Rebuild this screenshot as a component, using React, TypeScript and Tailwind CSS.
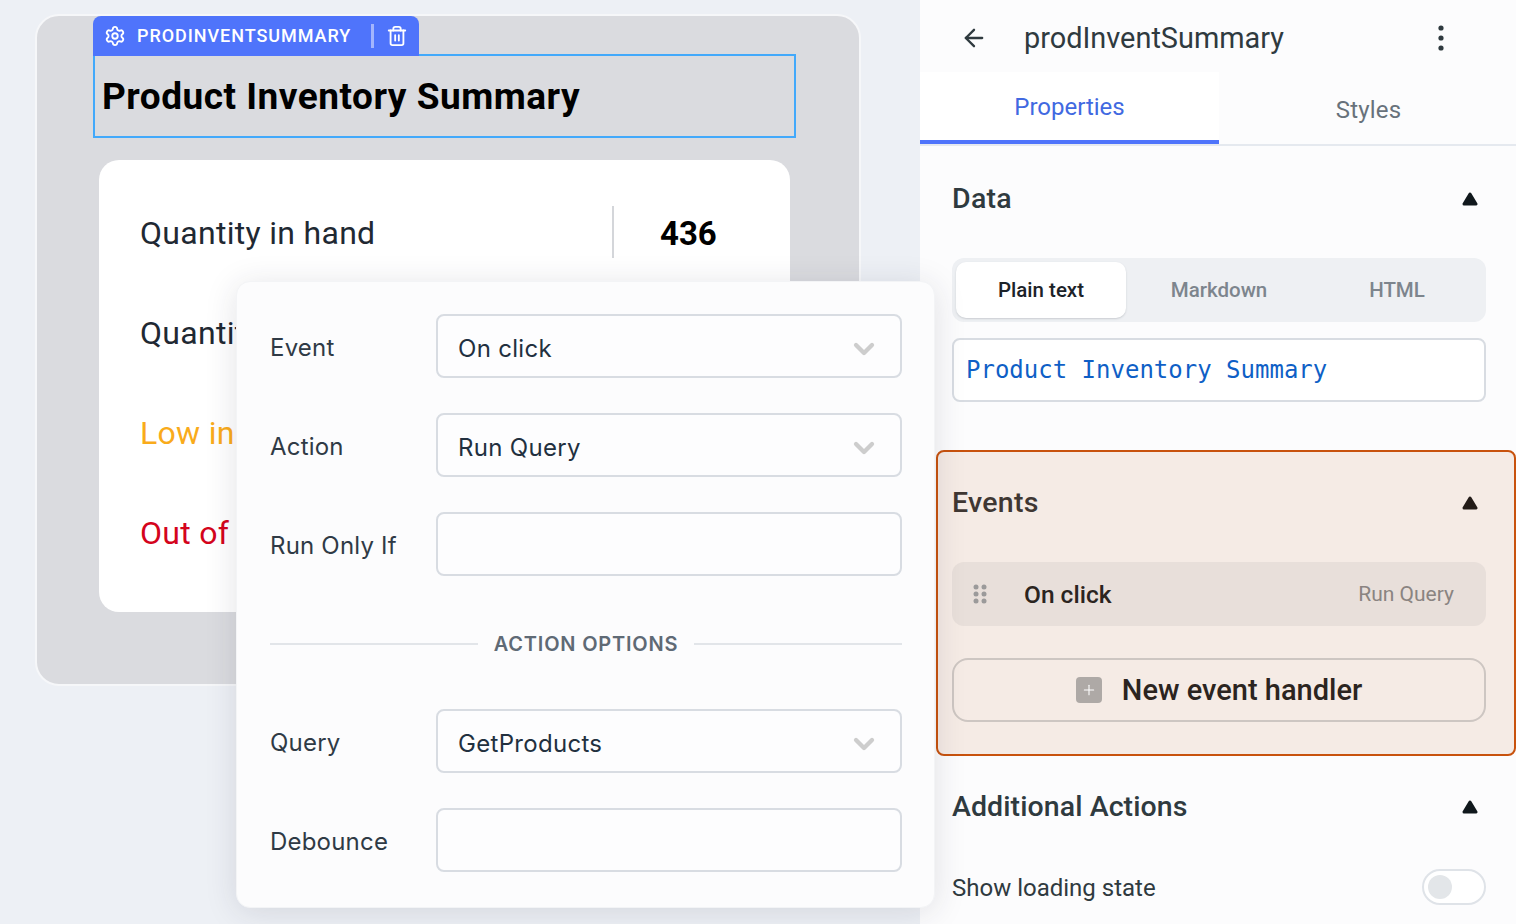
import { ArrowLeft, ChevronDown, Plus, Settings, Trash2 } from "lucide-react";

const sans = "font-['Roboto',sans-serif]";

const Triangle = ({ className }: { className: string }) => (
  <svg width="16" height="14" viewBox="0 0 16 14" className={className}>
    <path d="M8 2 L14 12 H2 Z" fill="currentColor" stroke="currentColor" strokeWidth="3" strokeLinejoin="round" />
  </svg>
);

const Grip = () => (
  <svg width="14" height="20" viewBox="0 0 14 20" className="fill-[#9b9a9a]">
    <circle cx="3" cy="3" r="2.5" />
    <circle cx="11" cy="3" r="2.5" />
    <circle cx="3" cy="10" r="2.5" />
    <circle cx="11" cy="10" r="2.5" />
    <circle cx="3" cy="17" r="2.5" />
    <circle cx="11" cy="17" r="2.5" />
  </svg>
);

const StatRow = ({ label, value, color, hasValue }: { label: string; value?: string; color: string; hasValue?: boolean }) => (
  <div className="flex h-[52px] items-center">
    <span className={`w-[472px] pt-[2px] text-[32px] tracking-[0.3px] ${color}`}>{label}</span>
    {hasValue && (
      <div className="flex h-[52px] items-center border-l-2 border-[#d4d6da] pl-[46px]">
        <span className="pt-1 text-[33px] font-bold text-black">{value}</span>
      </div>
    )}
  </div>
);

const Field = ({ label, value, select }: { label: string; value?: string; select?: boolean }) => (
  <div className="flex items-center">
    <span className="w-[166px] pt-1 text-[24px] tracking-[0.2px] text-[#2f3a45]">{label}</span>
    <div className="flex h-16 w-[466px] items-center justify-between rounded-[8px] border-2 border-[#d8dce2] bg-[#fdfdfe] pl-5 pr-[20px] text-[24px] tracking-[0.3px] text-[#22303f]">
      <span className="pt-[6px]">{value}</span>
      {select && <ChevronDown size={32} strokeWidth={3.2} className="mt-[6px] text-[#cdcdcd]" />}
    </div>
  </div>
);

const SectionHead = ({ title, color, arrow, tracking }: { title: string; color: string; arrow: string; tracking: string }) => (
  <div className="flex items-center justify-between pr-2">
    <span className={`text-[28.5px] font-medium ${tracking} ${color}`}>{title}</span>
    <Triangle className={arrow} />
  </div>
);

export default function App() {
  return (
    <div className={`relative flex h-[924px] w-[1516px] overflow-hidden bg-[#edf0f5] ${sans}`}>
      {/* canvas */}
      <div className="w-[920px] shrink-0 pl-[35px] pt-[14px]">
        <div className="h-[672px] w-[826px] rounded-[24px] border-2 border-[#f6f7f9] bg-[#dadbdf] pl-[56px] pt-[38px]">
          <div className="relative flex h-[84px] w-[703px] items-center border-2 border-[#42a9fb] pl-[7px]">
            <div className="absolute -left-[2px] -top-[40px] flex h-[40px] w-[326px] items-center rounded-t-[8px] bg-[#4f74fb] pl-[11px] text-white">
              <Settings size={22} strokeWidth={2} />
              <span className="ml-[11px] w-[234px] pb-[2px] text-[18px] font-medium tracking-[0.95px]">PRODINVENTSUMMARY</span>
              <span className="h-6 w-[3px] bg-[#a3b5fd]" />
              <Trash2 size={22} strokeWidth={2} className="ml-[12px]" />
            </div>
            <h1 className="pt-[2px] text-[37px] font-bold tracking-[0.5px] text-black">Product Inventory Summary</h1>
          </div>
          <div className="ml-[6px] mt-[22px] flex h-[452px] w-[691px] flex-col gap-12 rounded-[20px] bg-white pl-[41px] pt-[46px]">
            <StatRow label="Quantity in hand" value="436" color="text-[#1f2933]" hasValue />
            <StatRow label="Quantity" color="text-[#1f2933]" />
            <StatRow label="Low in" color="text-[#f9ab1b]" />
            <StatRow label="Out of" color="text-[#d4041c]" />
          </div>
        </div>
      </div>

      {/* settings panel */}
      <div className="flex w-[596px] flex-col bg-[#fcfcfd]">
        <div className="flex h-[72px] items-center pl-10 pr-[71px] pt-1 text-[#2f3a3f]">
          <ArrowLeft size={28} strokeWidth={2} />
          <span className="ml-[36px] flex-1 pt-[2px] text-[28.9px]">prodInventSummary</span>
          <svg width="8" height="26" viewBox="0 0 8 26" className="fill-[#2f3a3f]">
            <circle cx="4" cy="3" r="2.6" />
            <circle cx="4" cy="13" r="2.6" />
            <circle cx="4" cy="23" r="2.6" />
          </svg>
        </div>
        <div className="flex h-[74px] border-b-2 border-[#e5e9ef]">
          <div className="flex h-[72px] w-[299px] items-center justify-center border-b-4 border-[#4f74fb] bg-white pt-[2px] text-[24px] text-[#4169e1]">
            Properties
          </div>
          <div className="flex flex-1 items-center justify-center pl-[2px] pt-[3px] text-[24px] tracking-[0.2px] text-[#68727b]">Styles</div>
        </div>

        <div className="pl-[32px] pr-[30px] pt-[32px]">
          <SectionHead title="Data" color="text-[#2f3a3f]" arrow="text-[#10181c]" tracking="tracking-[0.3px]" />
          <div className="mt-[37px] flex h-16 items-center rounded-[12px] bg-[#eef0f3] px-1 text-[20.5px]">
            <div className="flex h-14 w-[170px] items-center justify-center rounded-[10px] bg-white pt-[2px] font-medium text-[#1c2329] shadow-[0_1px_2px_#c9ccd1]">
              Plain text
            </div>
            <span className="w-[186px] pt-[2px] text-center font-medium text-[#7d858d]">Markdown</span>
            <span className="w-[170px] pt-[2px] text-center font-medium text-[#7d858d]">HTML</span>
          </div>
          <div className="mt-4 flex h-16 items-center rounded-[8px] border-2 border-[#d8dce2] bg-white pl-3 font-['DejaVu_Sans_Mono',monospace] text-[24px] text-[#0f5fc6]">
            Product Inventory Summary
          </div>
        </div>

        <div className="ml-4 mt-12 h-[306px] rounded-[8px] border-2 border-[#c8520d] bg-[#f5ebe5] pl-[14px] pr-[28px] pt-[30px]">
          <SectionHead title="Events" color="text-[#3f3733]" arrow="text-[#231c18]" tracking="tracking-[0.3px]" />
          <div className="mt-[37px] flex h-16 items-center rounded-[12px] bg-[#e8dfda] pl-[21px] pr-8">
            <Grip />
            <span className="ml-[37px] flex-1 pt-1 text-[24.5px] font-medium text-[#2b2420]">On click</span>
            <span className="pt-[2px] text-[21px] text-[#8a8481]">Run Query</span>
          </div>
          <div className="mt-8 flex h-16 items-center justify-center rounded-[16px] border-2 border-[#cdc6c2]">
            <span className="flex h-[26px] w-[26px] items-center justify-center rounded-[4px] bg-[#aea9a6] text-white">
              <Plus size={16} strokeWidth={1.6} />
            </span>
            <span className="ml-5 pt-[2px] text-[29px] font-medium text-[#2b2420]">New event handler</span>
          </div>
        </div>

        <div className="pl-[32px] pr-[30px] pt-[30px]">
          <SectionHead title="Additional Actions" color="text-[#2f3a3f]" arrow="text-[#10181c]" tracking="tracking-[0.08px]" />
          <div className="mt-[39px] flex items-center justify-between">
            <span className="pt-[2px] text-[24px] text-[#2f3a3f]">Show loading state</span>
            <span className="flex h-9 w-16 items-center rounded-full border-2 border-[#dfe3e8] bg-white pl-1">
              <span className="h-6 w-6 rounded-full bg-[#e3e6e9]" />
            </span>
          </div>
        </div>
      </div>

      {/* event popover */}
      <div className="absolute left-[236px] top-[281px] flex h-[627px] w-[699px] flex-col rounded-[14px] border border-[#f3f4f6] bg-[#fcfcfd] pl-[33px] pr-[32px] pt-[32px] font-['Inter',sans-serif] shadow-[0_4px_32px_rgba(40,40,60,0.13)]">
        <div className="flex flex-col gap-[35px]">
          <Field label="Event" value="On click" select />
          <Field label="Action" value="Run Query" select />
          <Field label="Run Only If" />
        </div>
        <div className="mt-[53px] flex items-center gap-4">
          <span className="h-[2px] flex-1 bg-[#e2e5e9]" />
          <span className="text-[20px] font-semibold tracking-[0.8px] text-[#5f6a75]">ACTION OPTIONS</span>
          <span className="h-[2px] flex-1 bg-[#e2e5e9]" />
        </div>
        <div className="mt-[50px] flex flex-col gap-[35px]">
          <Field label="Query" value="GetProducts" select />
          <Field label="Debounce" />
        </div>
      </div>
    </div>
  );
}
